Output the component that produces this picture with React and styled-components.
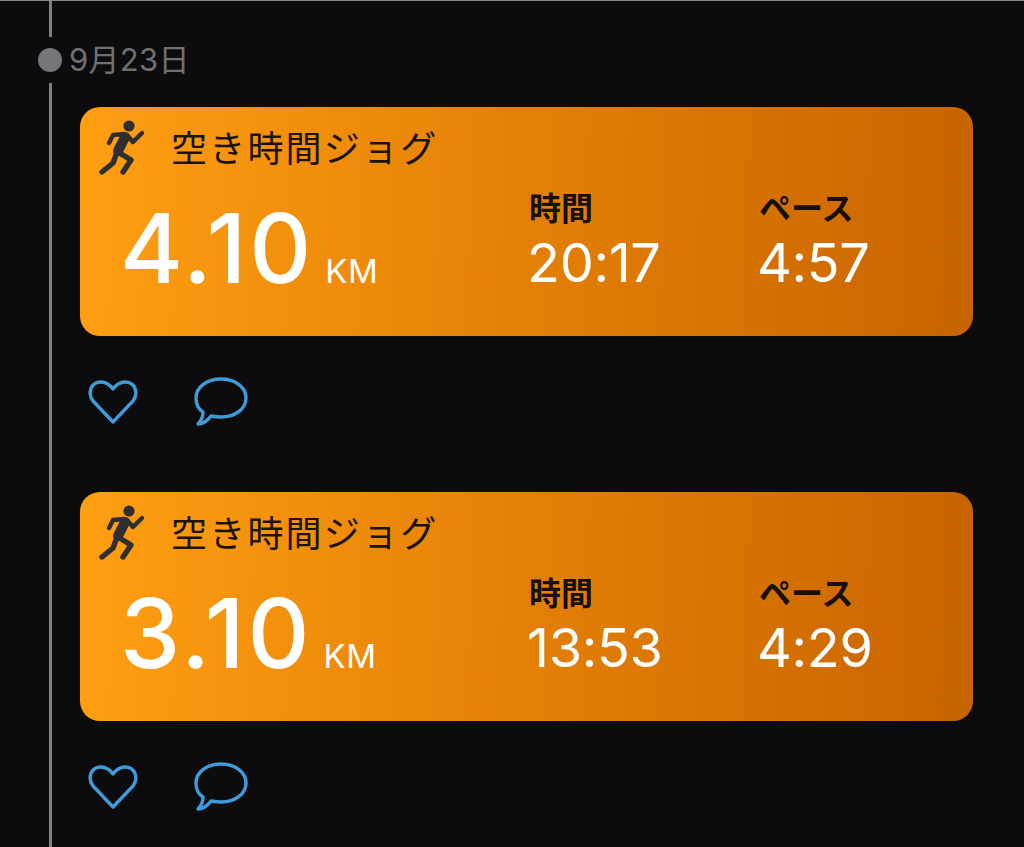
import React from 'react';
import styled, { createGlobalStyle } from 'styled-components';

const GlobalStyle = createGlobalStyle`
  html, body {
    margin: 0;
    padding: 0;
    background: #0c0c0e;
    font-family: Inter, "Noto Sans CJK JP", sans-serif;
  }
`;

const Page = styled.div`
  width: 1024px;
  height: 847px;
  overflow: hidden;
  background: #0c0c0e;
  border-top: 1px solid #8a8a8c;
  box-sizing: border-box;
`;

const RailStub = styled.div`
  width: 3px;
  height: 36px;
  margin-left: 49px;
  background: #808083;
`;

const DateRow = styled.div`
  display: flex;
  align-items: center;
  height: 46px;
  padding-left: 38px;
  gap: 7px;
`;

const Dot = styled.div`
  width: 24px;
  height: 24px;
  border-radius: 50%;
  background: #76767a;
`;

const DateText = styled.div`
  font-size: 31px;
  letter-spacing: 0.3px;
  color: #707073;
  margin-top: -6px;
`;

const Feed = styled.div`
  margin-left: 49px;
  padding: 24px 0 0 28px;
  border-left: 3px solid #808083;
  width: 893px;
  height: 764px;
`;

const Post = styled.div`
  height: 385px;
`;

const Card = styled.div`
  height: 229px;
  box-sizing: border-box;
  padding: 13px 0 0 18px;
  border-radius: 20px;
  background: linear-gradient(92deg, #ff9f12 0%, #e47f06 50%, #c86400 100%);
`;

const TitleRow = styled.div`
  display: flex;
  align-items: center;
  gap: 23px;
  height: 56px;
`;

const Title = styled.div`
  font-size: 36px;
  letter-spacing: 2.2px;
  color: #1c1204;
  margin-top: -4px;
`;

const Stats = styled.div`
  display: grid;
  grid-template-columns: 409px 230px auto;
  margin-top: 15px;
  padding-left: 22px;
`;

const Distance = styled.div`
  display: flex;
  align-items: baseline;
  gap: 11px;
  padding-top: 7px;
  color: #fff;
`;

const DistanceValue = styled.span`
  font-size: 96px;
  font-weight: 500;
  letter-spacing: 3px;
  line-height: 100px;
`;

const Unit = styled.span`
  font-size: 33px;
  letter-spacing: 0.5px;
`;

const Stat = styled.div`
  display: flex;
  flex-direction: column;
`;

const StatLabel = styled.div`
  font-size: 32px;
  font-weight: 700;
  line-height: 36px;
  color: #17100a;
`;

const StatValue = styled.div`
  font-size: 54px;
  font-weight: 400;
  letter-spacing: -0.3px;
  line-height: 56px;
  color: #fff;
  margin: 8px 0 0 -2px;
`;

const Actions = styled.div`
  display: flex;
  align-items: center;
  gap: 55px;
  height: 50px;
  margin-top: 41px;
  padding-left: 8px;
`;

const ActionIcon = styled.svg`
  display: block;
  fill: none;
  stroke: #3f9cd8;
  stroke-width: 3.4;
  stroke-linejoin: round;
`;

const Runner = () => (
  <svg width="50" height="58" viewBox="0 0 50 58" fill="none" stroke="#2f2f2f" strokeLinecap="round" strokeLinejoin="round">
    <circle cx="31" cy="7" r="5.6" fill="#2f2f2f" stroke="none" />
    <path d="M27 18 L20 32" strokeWidth="10" />
    <path d="M26 15 L15 16 L11 24" strokeWidth="4.4" />
    <path d="M29 16 L35 23 L44 14" strokeWidth="4.4" />
    <path d="M20 33 L33 41 L25 53" strokeWidth="5.4" />
    <path d="M18 36 L15 44 L4 53" strokeWidth="5.4" />
  </svg>
);

const Heart = () => (
  <ActionIcon width="50" height="46" viewBox="0 0 50 46">
    <path d="M25 43 L5 22 C-1 14 3 3 13 3 C18 3 22 6 25 10 C28 6 32 3 37 3 C47 3 51 14 45 22 Z" />
  </ActionIcon>
);

const Bubble = () => (
  <ActionIcon width="56" height="52" viewBox="0 0 56 52">
    <path d="M28 3 C42 3 53 11 53 22 C53 33 42 41 28 41 C24 41 21 40.5 18 40 C15 44 11 48 5 48 C8 45 10 41 10 36 C5 33 3 28 3 22 C3 11 14 3 28 3 Z" />
  </ActionIcon>
);

const runs = [
  { distance: '4.10', time: '20:17', pace: '4:57' },
  { distance: '3.10', time: '13:53', pace: '4:29' },
];

export default function App() {
  return (
    <Page>
      <GlobalStyle />
      <RailStub />
      <DateRow>
        <Dot />
        <DateText>9月23日</DateText>
      </DateRow>
      <Feed>
        {runs.map(run => (
          <Post key={run.distance}>
            <Card>
              <TitleRow>
                <Runner />
                <Title>空き時間ジョグ</Title>
              </TitleRow>
              <Stats>
                <Distance>
                  <DistanceValue>{run.distance}</DistanceValue>
                  <Unit>KM</Unit>
                </Distance>
                <Stat>
                  <StatLabel>時間</StatLabel>
                  <StatValue>{run.time}</StatValue>
                </Stat>
                <Stat>
                  <StatLabel>ペース</StatLabel>
                  <StatValue>{run.pace}</StatValue>
                </Stat>
              </Stats>
            </Card>
            <Actions>
              <Heart />
              <Bubble />
            </Actions>
          </Post>
        ))}
      </Feed>
    </Page>
  );
}
